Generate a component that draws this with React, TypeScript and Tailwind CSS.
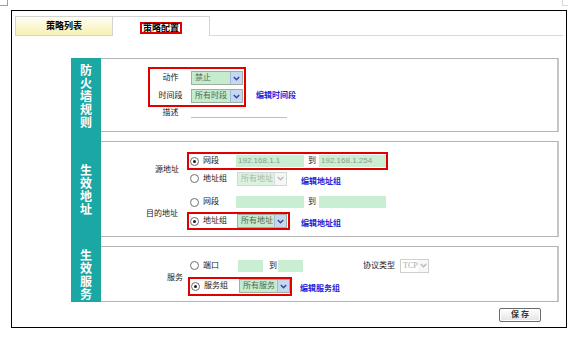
import React from "react";

const FONT = { fontFamily: '"Liberation Sans", "Noto Sans CJK SC", sans-serif' };

function Chevron({ color }: { color: string }) {
  return (
    <svg width="7" height="5" viewBox="0 0 7 5">
      <path d="M0.8 1 L3.5 3.8 L6.2 1" fill="none" stroke={color} strokeWidth="1.4" />
    </svg>
  );
}

function Select({ text, cls, disabled }: { text: string; cls: string; disabled?: boolean }) {
  return (
    <div
      className={`flex h-[14px] border ${disabled ? "border-[#d2d8d2]" : "border-[#9fb09f]"} ${cls}`}
    >
      <div
        className={`flex-1 flex items-center pl-[3px] text-[8px] leading-[12px] ${
          disabled ? "bg-[#dcf2e0] text-[#a9b9a9]" : "bg-[#c6ebcd] text-[#566856]"
        }`}
      >
        {text}
      </div>
      <div
        className={`w-[12px] flex items-center justify-center border-l ${
          disabled ? "bg-[#f6f6f6] border-[#dcdcdc]" : "bg-[#c7d7f2] border-[#a4b6dc]"
        }`}
      >
        <Chevron color={disabled ? "#b8b8b8" : "#2a4a9a"} />
      </div>
    </div>
  );
}

function Input({ text, cls }: { text?: string; cls: string }) {
  return (
    <div className={`h-[12px] bg-[#c9eed1] flex items-center pl-[2px] text-[8px] text-[#8c9e8c] ${cls}`}>
      {text}
    </div>
  );
}

function Radio({ checked }: { checked?: boolean }) {
  return (
    <div className="w-[9px] h-[9px] rounded-full border border-[#6e6e6e] bg-white flex items-center justify-center shrink-0">
      {checked && <div className="w-[3px] h-[3px] rounded-full bg-[#1e1e1e]" />}
    </div>
  );
}

function Link({ text }: { text: string }) {
  return <span className="text-[8px] font-bold text-[#2323d8] whitespace-nowrap">{text}</span>;
}

function Teal({ chars }: { chars: string }) {
  return (
    <div className="w-[30px] shrink-0 bg-[#1ba7a4] flex items-center justify-center overflow-hidden">
      <div
        className="w-[13px] text-[12px] leading-[13px] font-bold text-white text-center break-all"
        style={{ fontFamily: '"Noto Sans CJK SC", sans-serif' }}
      >
        {chars}
      </div>
    </div>
  );
}

function Gap() {
  return (
    <div className="flex h-[9px] shrink-0">
      <div className="w-[30px] bg-[#1ba7a4]" />
    </div>
  );
}

const BOX =
  "flex-1 border-t border-b border-r-2 border-t-[#b4b4b4] border-b-[#b4b4b4] border-r-[#c6c6c6]";

export default function App() {
  return (
    <div className="w-[568px] h-[337px] bg-white overflow-hidden text-[#1a1a1a]" style={FONT}>
      <div className="flex justify-between">
        <div className="w-[8px] h-[6px] border-r border-b border-[#a0a0a0]" />
        <div className="w-[6px] h-[6px] border-l border-b border-[#d8d8d8]" />
      </div>
      <div className="ml-[11px] mt-[4px] w-[556px] h-[318px] border border-black flex flex-col">
        {/* tabs */}
        <div className="flex items-end pt-[5px] pl-[3px] pr-[3px] shrink-0">
          <div className="w-[98px] h-[20px] pt-[1px] border border-[#d4d4d4] bg-gradient-to-b from-[#fffef4] to-[#f8f0b4] flex items-center justify-center text-[9px] font-bold text-black">
            策略列表
          </div>
          <div className="w-[97px] h-[20px] pt-[3px] border-t border-r border-[#d4d4d4] bg-white flex items-center justify-center">
            <span className="h-[12px] px-[1px] border-2 border-[#e00000] flex items-center text-[9px] font-bold text-black leading-[9px]">
              策略配置
            </span>
          </div>
          <div className="flex-1 border-b border-[#dadada]" />
        </div>

        {/* sections */}
        <div className="ml-[59px] mt-[22px] w-[488px] flex flex-col shrink-0">
          {/* section 1 */}
          <div className="flex h-[74px] shrink-0 overflow-hidden">
            <Teal chars="防火墙规则" />
            <div className={`${BOX} pt-[8px] pl-[47px]`}>
              <div className="flex items-end">
                <div className="w-[98px] border-2 border-[#e00000] flex flex-col">
                  <div className="flex items-center h-[18px]">
                    <span className="w-[41px] text-center text-[8px]">动作</span>
                    <Select text="禁止" cls="w-[52px]" />
                  </div>
                  <div className="flex items-center h-[18px]">
                    <span className="w-[41px] text-center text-[8px]">时间段</span>
                    <Select text="所有时段" cls="w-[52px]" />
                  </div>
                </div>
                <div className="h-[18px] mb-[2px] ml-[10px] flex items-center">
                  <Link text="编辑时间段" />
                </div>
              </div>
              <div className="flex pl-[2px]">
                <span className="w-[41px] h-[12px] leading-[12px] text-center text-[8px]">描述</span>
                <div className="w-[96px] h-[11px] border-b border-[#bdbdbd]" />
              </div>
            </div>
          </div>
          <Gap />
          {/* section 2 */}
          <div className="flex h-[96px] shrink-0 overflow-hidden">
            <Teal chars="生效地址" />
            <div className={`${BOX} pt-[10px]`}>
              <div className="flex">
                <div className="w-[86px] pr-[8px] flex items-center justify-end text-[8px]">源地址</div>
                <div className="flex flex-col">
                  <div className="w-[201px] h-[18px] border-2 border-[#e00000] flex items-center pl-[1px]">
                    <Radio checked />
                    <span className="ml-[4px] w-[33px] text-[8px]">网段</span>
                    <Input text="192.168.1.1" cls="w-[68px]" />
                    <span className="ml-[4px] w-[11px] text-[8px]">到</span>
                    <Input text="192.168.1.254" cls="w-[67px]" />
                  </div>
                  <div className="h-[17px] flex items-center pl-[3px]">
                    <Radio />
                    <span className="ml-[4px] w-[34px] text-[8px]">地址组</span>
                    <Select text="所有地址" cls="w-[50px]" disabled />
                    <span className="ml-[14px]">
                      <Link text="编辑地址组" />
                    </span>
                  </div>
                </div>
              </div>
              <div className="flex mt-[8px]">
                <div className="w-[86px] pr-[9px] flex items-center justify-end text-[8px]">目的地址</div>
                <div className="flex flex-col">
                  <div className="h-[14px] flex items-center pl-[3px]">
                    <Radio />
                    <span className="ml-[4px] w-[33px] text-[8px]">网段</span>
                    <Input cls="w-[68px]" />
                    <span className="ml-[4px] w-[11px] text-[8px]">到</span>
                    <Input cls="w-[67px]" />
                  </div>
                  <div className="flex items-center">
                    <div className="w-[103px] h-[18px] border-2 border-[#e00000] flex items-center pl-[1px]">
                      <Radio checked />
                      <span className="ml-[4px] w-[34px] text-[8px]">地址组</span>
                      <Select text="所有地址" cls="w-[50px]" />
                    </div>
                    <span className="ml-[11px]">
                      <Link text="编辑地址组" />
                    </span>
                  </div>
                </div>
              </div>
            </div>
          </div>
          <Gap />
          {/* section 3 */}
          <div className="flex h-[56px] shrink-0 overflow-hidden">
            <Teal chars="生效服务" />
            <div className={`${BOX} pt-[10px]`}>
              <div className="flex">
                <div className="w-[86px] pr-[4px] flex items-center justify-end text-[8px]">服务</div>
                <div className="flex flex-col">
                  <div className="h-[17px] flex items-center pl-[3px]">
                    <Radio />
                    <span className="ml-[4px] w-[35px] text-[8px]">端口</span>
                    <Input cls="w-[25px]" />
                    <span className="ml-[6px] w-[9px] text-[8px]">到</span>
                    <Input cls="w-[25px]" />
                    <span className="ml-[60px] w-[37px] text-[8px]">协议类型</span>
                    <div className="w-[29px] h-[14px] border border-[#cfcfcf] flex">
                      <div
                        className="flex-1 flex items-center pl-[2px] text-[8px] text-[#aaaaaa]"
                        style={{ fontFamily: '"Liberation Serif", serif' }}
                      >
                        TCP
                      </div>
                      <div className="w-[10px] flex items-center justify-center bg-[#f7f7f7]">
                        <Chevron color="#b8b8b8" />
                      </div>
                    </div>
                  </div>
                  <div className="flex items-center">
                    <div className="ml-[1px] w-[104px] h-[19px] border-2 border-[#e00000] flex items-center pl-[1px]">
                      <Radio checked />
                      <span className="ml-[4px] w-[35px] text-[8px]">服务组</span>
                      <Select text="所有服务" cls="w-[51px]" />
                    </div>
                    <span className="ml-[8px]">
                      <Link text="编辑服务组" />
                    </span>
                  </div>
                </div>
              </div>
            </div>
          </div>
        </div>

        {/* save */}
        <div className="flex justify-end pr-[25px] mt-[6px]">
          <div className="w-[42px] h-[14px] border border-[#6a6a6a] rounded-[2px] bg-gradient-to-b from-[#ffffff] to-[#e4e4e4] shadow-[inset_0_0_0_1px_#ffffff] flex items-center justify-center text-[8px] font-bold text-[#333]">
            保 存
          </div>
        </div>
      </div>
    </div>
  );
}
